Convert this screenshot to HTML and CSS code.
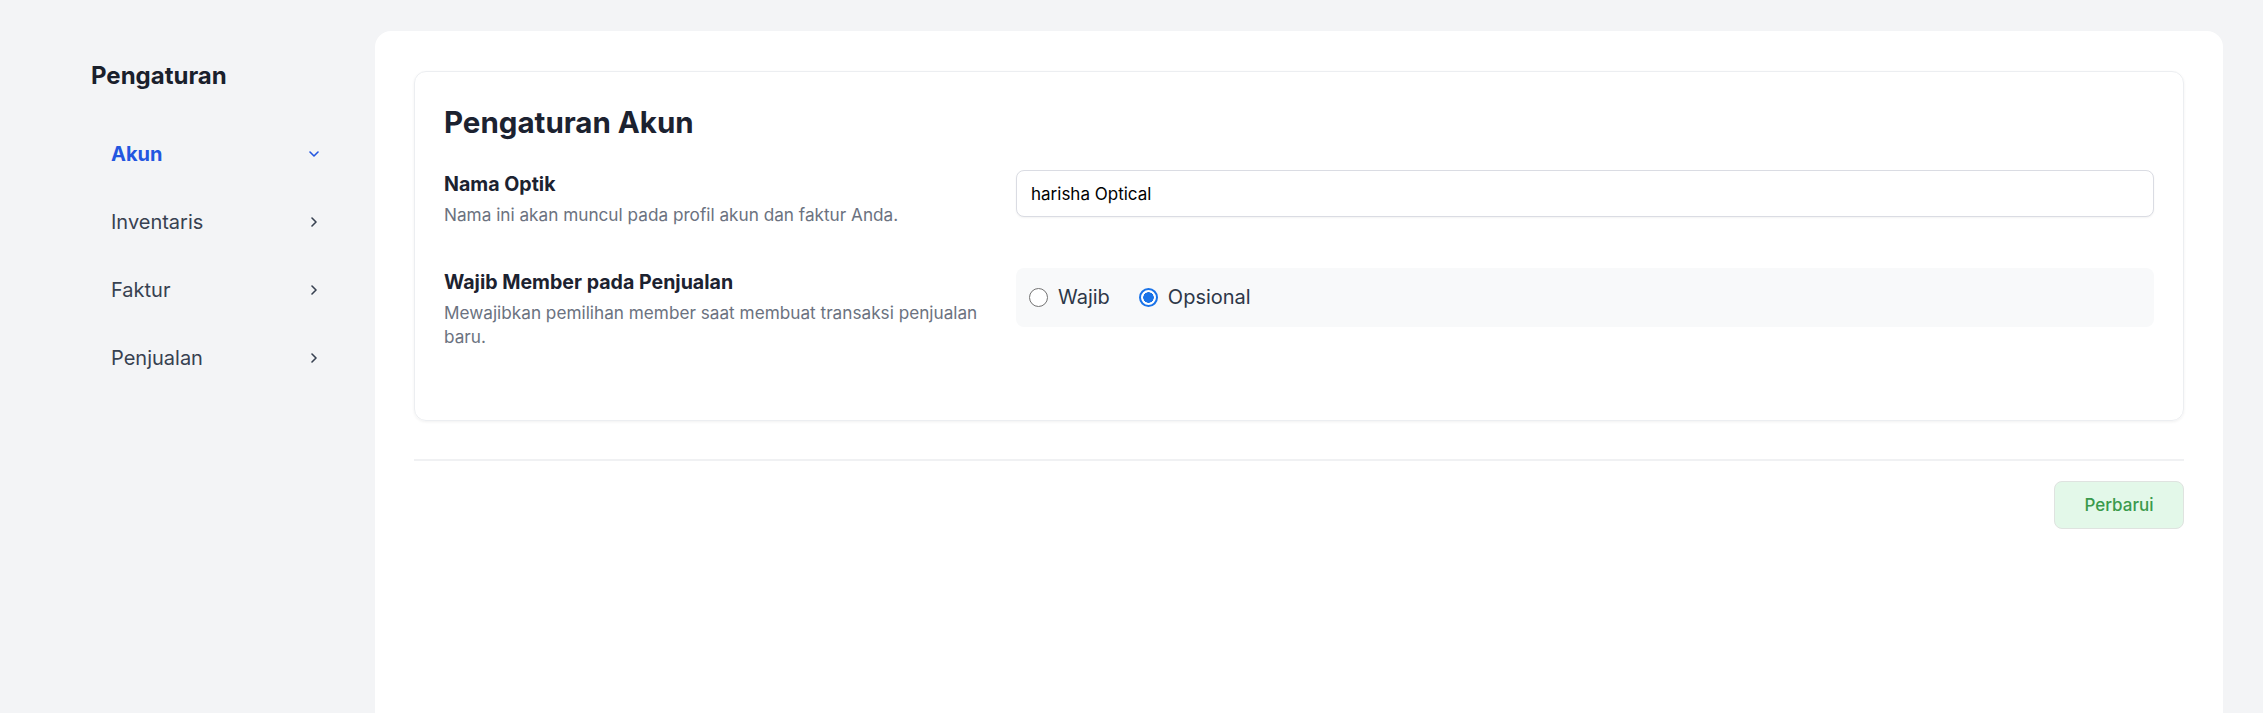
FILE: index.html
```html
<!DOCTYPE html>
<html lang="id">
<head>
<meta charset="utf-8">
<title>Pengaturan</title>
<link rel="stylesheet" href="styles.css">
</head>
<body>
<div class="page">
  <aside class="sidebar">
    <h2 class="sidebar-title">Pengaturan</h2>
    <nav class="nav">
      <a class="nav-item active" href="#">
        <span>Akun</span>
        <svg class="chev-down" width="10" height="6" viewBox="0 0 10 6"><path d="M1 1l4 4 4-4" fill="none" stroke="currentColor" stroke-width="1.6" stroke-linecap="round" stroke-linejoin="round"/></svg>
      </a>
      <a class="nav-item" href="#">
        <span>Inventaris</span>
        <svg class="chev-right" width="6" height="10" viewBox="0 0 6 10"><path d="M1 1l4 4-4 4" fill="none" stroke="currentColor" stroke-width="1.6" stroke-linecap="round" stroke-linejoin="round"/></svg>
      </a>
      <a class="nav-item" href="#">
        <span>Faktur</span>
        <svg class="chev-right" width="6" height="10" viewBox="0 0 6 10"><path d="M1 1l4 4-4 4" fill="none" stroke="currentColor" stroke-width="1.6" stroke-linecap="round" stroke-linejoin="round"/></svg>
      </a>
      <a class="nav-item" href="#">
        <span>Penjualan</span>
        <svg class="chev-right" width="6" height="10" viewBox="0 0 6 10"><path d="M1 1l4 4-4 4" fill="none" stroke="currentColor" stroke-width="1.6" stroke-linecap="round" stroke-linejoin="round"/></svg>
      </a>
    </nav>
  </aside>
  <main class="panel">
    <section class="card">
      <h1 class="card-title">Pengaturan Akun</h1>
      <div class="row">
        <div class="row-info">
          <div class="label">Nama Optik</div>
          <p class="desc">Nama ini akan muncul pada profil akun dan faktur Anda.</p>
        </div>
        <div class="row-field">
          <input class="text-input" type="text" value="harisha Optical">
        </div>
      </div>
      <div class="row">
        <div class="row-info">
          <div class="label">Wajib Member pada Penjualan</div>
          <p class="desc">Mewajibkan pemilihan member saat membuat transaksi penjualan baru.</p>
        </div>
        <div class="row-field">
          <div class="radio-group">
            <label class="radio"><input type="radio" name="member"><span>Wajib</span></label>
            <label class="radio"><input type="radio" name="member" checked><span>Opsional</span></label>
          </div>
        </div>
      </div>
    </section>
    <hr class="divider">
    <div class="actions">
      <button class="btn-update" type="button">Perbarui</button>
    </div>
  </main>
</div>
</body>
</html>
```

FILE: styles.css
```css
* { box-sizing: border-box; }

html, body {
  margin: 0;
  padding: 0;
  height: 100%;
}

body {
  background: #f3f4f6;
  font-family: Inter, "Noto Sans", "Liberation Sans", sans-serif;
  color: #1f2937;
  overflow: hidden;
}

.page {
  display: flex;
  padding-top: 31px;
  height: 100vh;
}

.sidebar {
  width: 375px;
  flex: none;
  padding: 29px 37px 0 91px;
}

.sidebar-title {
  margin: 0 0 28px;
  font-size: 24px;
  line-height: 32px;
  font-weight: 700;
  color: #1a202c;
}

.nav {
  display: flex;
  flex-direction: column;
}

.nav-item {
  display: flex;
  align-items: center;
  justify-content: space-between;
  height: 68px;
  padding: 0 21px 0 20px;
  font-size: 20px;
  color: #374151;
  text-decoration: none;
}

.nav-item.active {
  color: #2356e0;
  font-weight: 700;
}

.nav-item .chev-down { color: #2356e0; margin-right: -2px; }
.nav-item .chev-right { color: #374151; }

.panel {
  flex: 1;
  margin-right: 40px;
  background: #ffffff;
  border-radius: 16px 16px 0 0;
  padding: 40px 39px;
}

.card {
  border: 1px solid #eceef1;
  border-radius: 12px;
  box-shadow: 0 1px 3px rgba(0, 0, 0, 0.06);
  padding: 32px 29px 30px;
}

.card-title {
  margin: 0 0 30px;
  font-size: 29.5px;
  line-height: 36px;
  font-weight: 700;
  color: #1c2230;
}

.row {
  display: grid;
  grid-template-columns: 1fr 2fr;
  margin-bottom: 40px;
}

.row-info { padding-right: 20px; }

.label {
  font-size: 19.6px;
  line-height: 28px;
  font-weight: 700;
  color: #1c2230;
}

.desc {
  margin: 5px 0 0;
  font-size: 17.2px;
  line-height: 24.5px;
  color: #6b7280;
}

.row-field { padding-left: 2px; }

.text-input {
  display: block;
  width: 100%;
  height: 47px;
  border: 1px solid #dadce3;
  border-radius: 8px;
  box-shadow: 0 1px 2px rgba(0, 0, 0, 0.05);
  padding: 0 14px;
  font-family: Inter, "Noto Sans", sans-serif;
  font-size: 17px;
  color: #000000;
  background: #ffffff;
  outline: none;
}

.radio-group {
  display: flex;
  align-items: center;
  gap: 29px;
  height: 59px;
  padding: 0 14px 0 13px;
  background: #f8f9fa;
  border-radius: 8px;
}

.radio {
  display: flex;
  align-items: center;
  gap: 10px;
  font-size: 20px;
  color: #2d3748;
}

.radio input {
  appearance: none;
  -webkit-appearance: none;
  margin: 0;
  width: 19px;
  height: 19px;
  border: 1.5px solid #737373;
  border-radius: 50%;
  background: #ffffff;
}

.radio input:checked {
  border: 2px solid #1a73e8;
  background: radial-gradient(circle, #1a73e8 0 5px, #ffffff 5.5px);
}

.divider {
  margin: 38px 0 20px;
  border: 0;
  border-top: 2px solid #f0f1f3;
}

.actions {
  display: flex;
  justify-content: flex-end;
}

.btn-update {
  width: 130px;
  height: 48px;
  border: 1px solid #dfe3e0;
  border-radius: 8px;
  background: #e3f8e9;
  color: #3a9a4c;
  font-family: Inter, "Noto Sans", sans-serif;
  font-size: 17px;
  font-weight: 500;
}
```
